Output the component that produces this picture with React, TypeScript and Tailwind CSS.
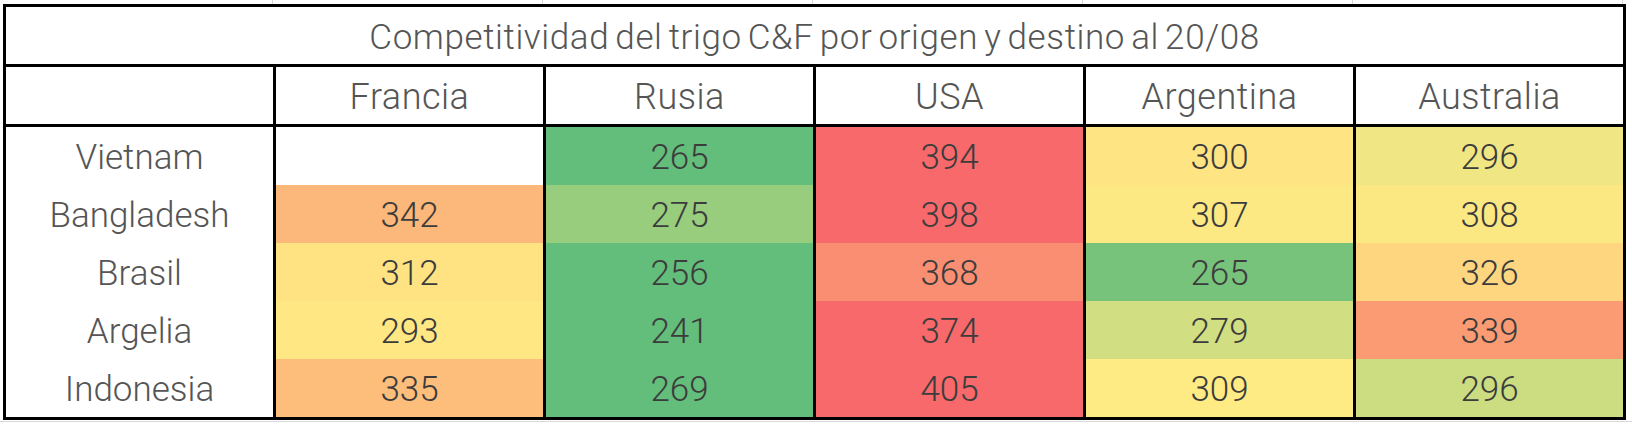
import React from 'react';

type Cell = { v: number | null; bg: string };

const cols = ['Francia', 'Rusia', 'USA', 'Argentina', 'Australia'];

// colores tomados a ojo de la escala de la planilla
const rows: { name: string; cells: Cell[] }[] = [
    {
        name: 'Vietnam',
        cells: [
            { v: null, bg: 'bg-white' },
            { v: 265, bg: 'bg-[#63be7b]' },
            { v: 394, bg: 'bg-[#f8696b]' },
            { v: 300, bg: 'bg-[#ffe483]' },
            { v: 296, bg: 'bg-[#f0e683]' },
        ],
    },
    {
        name: 'Bangladesh',
        cells: [
            { v: 342, bg: 'bg-[#fcb77a]' },
            { v: 275, bg: 'bg-[#98cd7e]' },
            { v: 398, bg: 'bg-[#f8696b]' },
            { v: 307, bg: 'bg-[#fde983]' },
            { v: 308, bg: 'bg-[#fce883]' },
        ],
    },
    {
        name: 'Brasil',
        cells: [
            { v: 312, bg: 'bg-[#ffe382]' },
            { v: 256, bg: 'bg-[#63be7b]' },
            { v: 368, bg: 'bg-[#fa8e72]' },
            { v: 265, bg: 'bg-[#77c37c]' },
            { v: 326, bg: 'bg-[#fed680]' },
        ],
    },
    {
        name: 'Argelia',
        cells: [
            { v: 293, bg: 'bg-[#ffe884]' },
            { v: 241, bg: 'bg-[#63be7b]' },
            { v: 374, bg: 'bg-[#f8696b]' },
            { v: 279, bg: 'bg-[#d1de82]' },
            { v: 339, bg: 'bg-[#fb9b74]' },
        ],
    },
    {
        name: 'Indonesia',
        cells: [
            { v: 335, bg: 'bg-[#fdbe7b]' },
            { v: 269, bg: 'bg-[#63be7b]' },
            { v: 405, bg: 'bg-[#f8696b]' },
            { v: 309, bg: 'bg-[#ffeb84]' },
            { v: 296, bg: 'bg-[#cbdc81]' },
        ],
    },
];

const font = "font-['Roboto','Liberation_Sans',sans-serif] font-light";

export default function App() {
    return (
        <div className={`w-[1632px] h-[426px] bg-white ${font}`}>
            {/* lineas de la grilla de la planilla por encima */}
            <div className="ml-[6px] flex h-[4px] w-[1617px]">
                <div className="w-[267px] border-r border-[#d9d9d9]" />
                {cols.map(c => (
                    <div key={c} className="w-[270px] border-r border-[#d9d9d9]" />
                ))}
            </div>

            <div className="ml-[3px] w-[1623px] border-[3px] border-black">
                <div className="flex h-[60px] items-center justify-center border-b-[3px] border-black pt-[3px] text-[35px] leading-none tracking-[0.6px] [word-spacing:-3px] text-[#555]">
                    Competitividad del trigo C&amp;F por origen y destino al 20/08
                </div>

                <div className="grid h-[60px] grid-cols-[267px_repeat(5,270px)] border-b-[3px] border-black">
                    <div />
                    {cols.map(c => (
                        <div key={c} className="flex items-center justify-center border-l-[3px] border-black pt-[2px] text-[36px] leading-none tracking-[0.5px] text-[#555]">
                            {c}
                        </div>
                    ))}
                </div>

                {rows.map(r => (
                    <div key={r.name} className="grid h-[58px] grid-cols-[267px_repeat(5,270px)]">
                        <div className="flex items-center justify-center pt-[2px] text-[35px] leading-none text-[#555]">{r.name}</div>
                        {r.cells.map((c, i) => (
                            <div key={i} className={`flex items-center justify-center border-l-[3px] border-black pt-[2px] text-[35px] leading-none text-[#3c3c3c] ${c.bg}`}>
                                {c.v}
                            </div>
                        ))}
                    </div>
                ))}
            </div>
            <div className="mt-[1px] h-[4px] w-full border-t border-[#d9d9d9]" />
        </div>
    );
}
